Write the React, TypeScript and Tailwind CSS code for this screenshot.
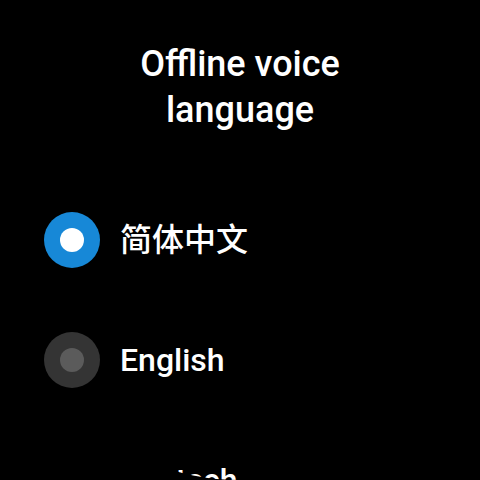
const languages = [
  { label: "简体中文", selected: true },
  { label: "English", selected: false },
  { label: "Deutsch", selected: false },
];

function Radio({ on }: { on: boolean }) {
  return (
    <div
      className={`w-14 h-14 rounded-full flex items-center justify-center shrink-0 ${
        on ? "bg-[#1788d7]" : "bg-[#343434]"
      }`}
    >
      <div className={`w-6 h-6 rounded-full ${on ? "bg-white" : "bg-[#5b5b5b]"}`} />
    </div>
  );
}

export default function App() {
  return (
    <div className="w-[480px] h-[480px] bg-black overflow-hidden">
      <div className="w-[480px] h-[480px] rounded-full overflow-hidden bg-black text-white font-['Roboto','Noto_Sans_CJK_SC',sans-serif]">
        <h1 className="pt-[41px] text-center text-[36px] leading-[46px] font-medium">
          Offline voice
          <br />
          language
        </h1>

        <ul className="mt-[47px] flex flex-col">
          {languages.map((lang) => (
            <li key={lang.label} className="h-[120px] flex items-center gap-5 pl-[44px]">
              <Radio on={lang.selected} />
              <span className="text-[32px] font-medium">{lang.label}</span>
            </li>
          ))}
        </ul>
      </div>
    </div>
  );
}
